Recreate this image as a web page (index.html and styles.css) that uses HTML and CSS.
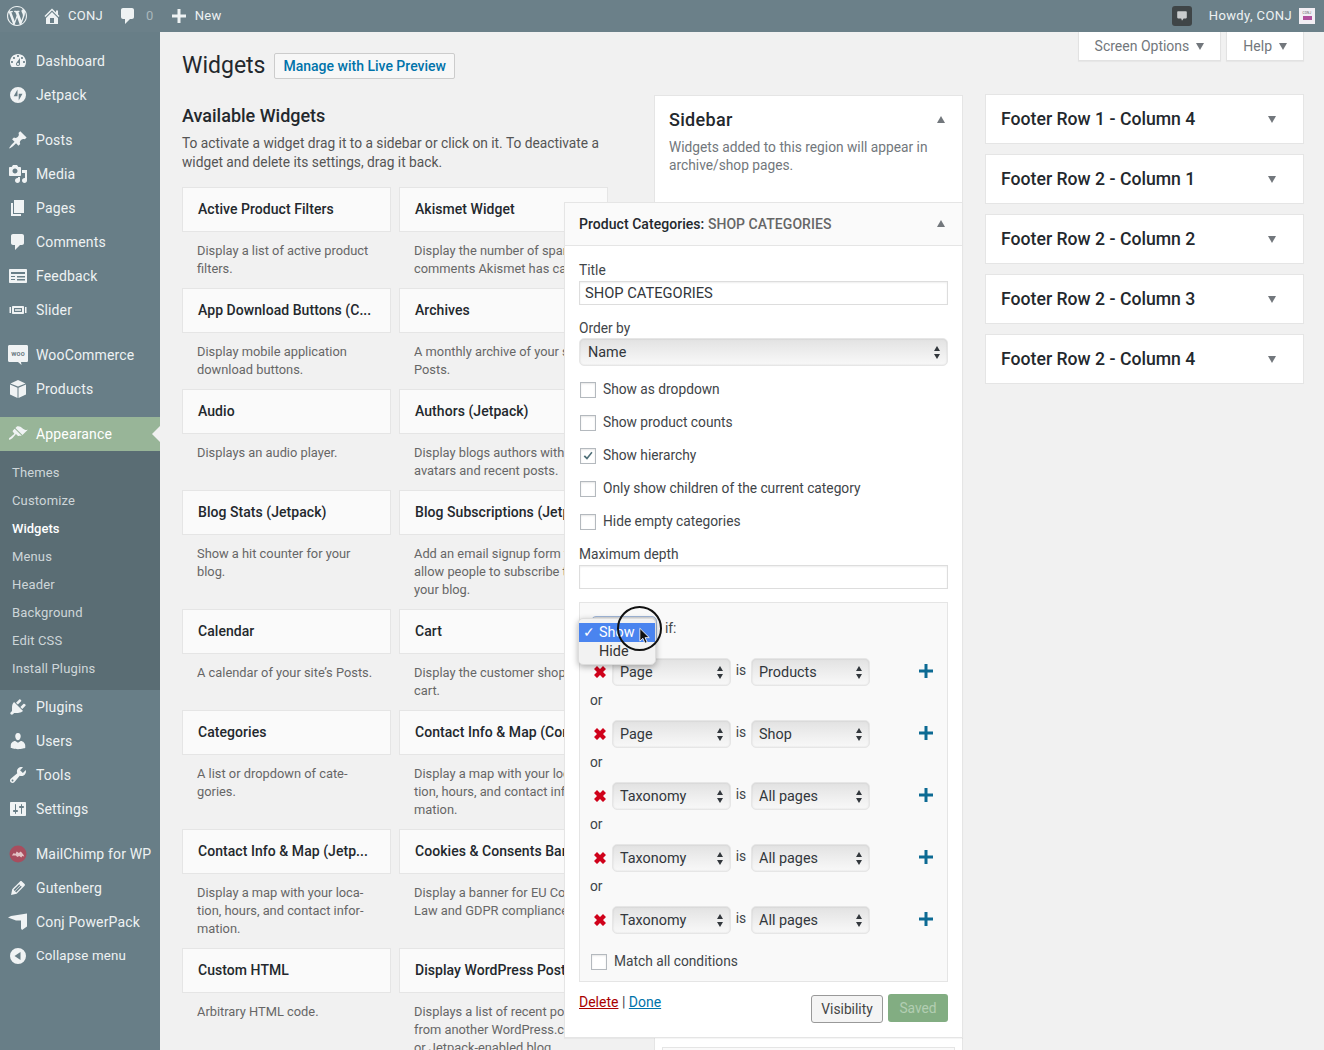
FILE: index.html
```html
<!DOCTYPE html>
<html lang="en">
<head>
<meta charset="utf-8">
<title>Widgets</title>
<link rel="stylesheet" href="styles.css">
</head>
<body>
<header class="adminbar">
  <div class="bar-left">
    <svg class="bar-logo" viewBox="0 0 20 20"><path d="M20 10c0-5.51-4.49-10-10-10C4.48 0 0 4.49 0 10c0 5.52 4.48 10 10 10 5.51 0 10-4.48 10-10zM7.78 15.37L4.37 6.22c.55-.02 1.17-.08 1.17-.08.5-.06.44-1.13-.06-1.11 0 0-1.45.11-2.37.11-.18 0-.37 0-.58-.01C4.12 2.69 6.87 1.11 10 1.11c2.33 0 4.45.87 6.05 2.34-.68-.11-1.65.39-1.65 1.58 0 .74.45 1.36.9 2.1.35.61.55 1.36.55 2.46 0 1.49-1.4 5-1.4 5l-3.03-8.37c.54-.02.82-.17.82-.17.5-.05.44-1.25-.06-1.22 0 0-1.44.12-2.38.12-.87 0-2.33-.12-2.33-.12-.5-.03-.56 1.2-.06 1.22l.92.08 1.26 3.41zM17.41 10c.24-.64.74-1.87.43-4.25.7 1.29 1.05 2.71 1.05 4.25 0 3.29-1.73 6.24-4.4 7.78.97-2.59 1.94-5.2 2.92-7.78zM6.1 18.09C3.12 16.65 1.11 13.53 1.11 10c0-1.3.23-2.48.72-3.59C3.25 10.3 4.67 14.2 6.1 18.09zm4.03-6.63l2.58 6.98c-.86.29-1.76.45-2.71.45-.79 0-1.57-.11-2.29-.33.81-2.38 1.62-4.74 2.42-7.1z"/></svg>
    <span class="bar-item bar-site"><svg class="bar-icon" viewBox="0 0 20 20"><path d="M16 8.5l1.53 1.53-1.06 1.06L10 4.62l-6.47 6.47-1.06-1.06L10 2.5l4 4v-2h2v4zm-6-2.46l6 5.99V18H4v-5.97zM12 17v-5H8v5h4z"/></svg>CONJ</span>
    <span class="bar-item bar-comments"><svg class="bar-icon" viewBox="0 0 20 20"><path d="M5 2h9c1.1 0 2 .9 2 2v7c0 1.1-.9 2-2 2h-2l-5 5v-5H5c-1.1 0-2-.9-2-2V4c0-1.1.9-2 2-2z"/></svg><span class="bar-zero">0</span></span>
    <span class="bar-item bar-new"><svg class="bar-icon" viewBox="0 0 20 20"><path d="M11.5 8.500h5.500v3h-5.500v5.500h-3v-5.500H3v-3h5.500V3h3z"/></svg>New</span>
  </div>
  <div class="bar-right">
    <span class="bar-notice"><svg viewBox="0 0 20 20"><path d="M5 4h10c.6 0 1 .4 1 1v7c0 .6-.4 1-1 1h-3l-2 3-1-3H5c-.6 0-1-.4-1-1V5c0-.6.4-1 1-1z"/></svg></span>
    <span class="bar-howdy">Howdy, CONJ</span>
    <span class="bar-avatar"><span class="avatar-text">CONJ</span><span class="avatar-mark"></span></span>
  </div>
</header>

<div class="shell">
  <nav class="sidemenu">
    <a class="menu-item"><svg viewBox="0 0 20 20"><path d="M3.760 16h12.480c1.100-1.370 1.760-3.110 1.760-5 0-4.420-3.580-8-8-8s-8 3.580-8 8c0 1.890.66 3.630 1.760 5zM10 4c.55 0 1 .45 1 1s-.45 1-1 1-1-.45-1-1 .45-1 1-1zM6 6c.55 0 1 .45 1 1s-.45 1-1 1-1-.45-1-1 .45-1 1-1zm8 0c.55 0 1 .45 1 1s-.45 1-1 1-1-.45-1-1 .45-1 1-1zm-5.370 5.550L12 7v6c0 1.100-.9 2-2 2s-2-.9-2-2c0-.57.24-1.080.63-1.450zM4 10c.55 0 1 .45 1 1s-.45 1-1 1-1-.45-1-1 .45-1 1-1zm12 0c.55 0 1 .45 1 1s-.45 1-1 1-1-.45-1-1 .45-1 1-1zm-5 3c0-.55-.45-1-1-1s-1 .45-1 1 .45 1 1 1 1-.45 1-1z" fill-rule="evenodd"/></svg>Dashboard</a>
    <a class="menu-item"><svg viewBox="0 0 20 20"><path fill-rule="evenodd" d="M10 2a8 8 0 100 16 8 8 0 000-16zM9.500 4.500v6.800H5.700zM10.700 15.500V8.700h3.800z"/></svg>Jetpack</a>
    <a class="menu-item menu-gap"><svg viewBox="0 0 20 20"><path d="M10.440 3.020l1.820-1.820 6.360 6.350-1.830 1.820c-1.050-.68-2.480-.57-3.410.36l-.75.75c-.92.93-1.040 2.350-.35 3.410l-1.830 1.820-2.410-2.410-2.800 2.790c-.42.42-3.380 2.710-3.800 2.290s1.860-3.390 2.280-3.810l2.790-2.790L4.100 9.360l1.830-1.820c1.050.69 2.480.57 3.400-.36l.75-.75c.93-.92 1.050-2.350.36-3.410z"/></svg>Posts</a>
    <a class="menu-item"><svg viewBox="0 0 20 20"><path d="M13 11V4c0-.55-.45-1-1-1h-1.670L9 1H5L3.670 3H2c-.55 0-1 .45-1 1v7c0 .55.45 1 1 1h10c.55 0 1-.45 1-1zM7 4.500c1.380 0 2.500 1.120 2.500 2.500S8.380 9.500 7 9.500 4.500 8.380 4.500 7 5.620 4.500 7 4.500zM14 6h5v10.500c0 1.380-1.120 2.500-2.500 2.500S14 17.880 14 16.500s1.120-2.500 2.500-2.500c.17 0 .34.02.5.05V9h-3V6zm-4 8.050V13h2v3.500c0 1.380-1.120 2.500-2.500 2.500S7 17.880 7 16.500 8.120 14 9.500 14c.17 0 .34.02.5.05z"/></svg>Media</a>
    <a class="menu-item"><svg viewBox="0 0 20 20"><path d="M6 15V2h10v13H6zm-1 1h8v2H3V5h2v11z"/></svg>Pages</a>
    <a class="menu-item"><svg viewBox="0 0 20 20"><path d="M5 2h9c1.100 0 2 .9 2 2v7c0 1.100-.9 2-2 2h-2l-5 5v-5H5c-1.100 0-2-.9-2-2V4c0-1.100.9-2 2-2z"/></svg>Comments</a>
    <a class="menu-item"><svg viewBox="0 0 20 20"><path fill-rule="evenodd" d="M2 3h16c.55 0 1 .45 1 1v12c0 .55-.45 1-1 1H2c-.55 0-1-.45-1-1V4c0-.55.45-1 1-1zm1 3v2h14V6zm0 4v1h4v-1zm0 3v1h4v-1zm6-3v1.500h8V10zm0 3v1.500h8V13z"/></svg>Feedback</a>
    <a class="menu-item"><svg viewBox="0 0 20 20"><path fill-rule="evenodd" d="M5 6h10c.55 0 1 .45 1 1v6c0 .55-.45 1-1 1H5c-.55 0-1-.45-1-1V7c0-.55.45-1 1-1zm1 2v4h8V8zM1.500 7H3v6H1.500zM17 7h1.500v6H17zM7 9h6v.8H7zm0 1.300h6v.8H7z"/></svg>Slider</a>
    <a class="menu-item menu-gap"><svg viewBox="0 0 20 20"><path d="M1.500 0h17C19.500 0 20 .6 20 1.500v14c0 1-.6 1.500-1.500 1.500H13l.5 3-3.500-3H1.500C.5 17 0 16.400 0 15.500v-14C0 .6.6 0 1.500 0z"/><text class="woo-text" x="10" y="11" text-anchor="middle">woo</text></svg>WooCommerce</a>
    <a class="menu-item"><svg viewBox="0 0 20 20"><path d="M10 1l7.500 3.400L10 7.600 2.500 4.400zM2 5.500l7.500 3.200V19L2 15.500zM18 5.500V15.500L10.500 19V8.700z"/></svg>Products</a>
    <a class="menu-item menu-gap menu-active"><svg viewBox="0 0 20 20"><path d="M14.480 11.060L7.410 3.990l1.500-1.500c.5-.56 2.300-.47 3.510.32 1.210.8 1.430 1.280 2.910 2.100 1.180.64 2.450 1.260 4.450.85zm-.71.71L6.700 4.700 4.930 6.470c-.39.39-.39 1.020 0 1.410l1.060 1.060c.39.39.39 1.030 0 1.420-.6.6-1.430 1.110-2.210 1.690-.35.26-.7.53-1.010.84C1.430 13.230.4 14.850 1.100 15.550s2.320-.33 3.680-1.690c.31-.31.58-.66.84-1.010.58-.78 1.090-1.610 1.690-2.210.39-.39 1.020-.39 1.410 0l1.060 1.060c.39.39 1.030.39 1.420 0z"/></svg>Appearance</a>
    <div class="submenu">
      <a class="sub-item">Themes</a>
      <a class="sub-item">Customize</a>
      <a class="sub-item sub-current">Widgets</a>
      <a class="sub-item">Menus</a>
      <a class="sub-item">Header</a>
      <a class="sub-item">Background</a>
      <a class="sub-item">Edit CSS</a>
      <a class="sub-item">Install Plugins</a>
    </div>
    <a class="menu-item"><svg viewBox="0 0 20 20"><path d="M13.110 4.360L9.870 7.600 8 5.730l3.240-3.240c.35-.34 1.050-.2 1.560.32.52.51.66 1.210.31 1.550zm-8 1.770l.91-1.120 9.010 9.010-1.190.84c-.71.71-2.630 1.160-3.820 1.160H6.140L4.900 17.260c-.59.59-1.540.59-2.120 0-.59-.58-.59-1.530 0-2.120l1.240-1.240v-3.880c0-1.130.4-3.190 1.090-3.890zm7.260 3.970l3.240-3.240c.34-.35 1.040-.21 1.550.31.52.51.66 1.210.31 1.550l-3.240 3.250z"/></svg>Plugins</a>
    <a class="menu-item"><svg viewBox="0 0 20 20"><path d="M10 9.250c-2.270 0-2.730-3.440-2.730-3.440C7 4.020 7.820 2 9.970 2c2.160 0 2.980 2.020 2.710 3.810 0 0-.41 3.440-2.680 3.440zm0 2.570L12.720 10c2.390 0 4.520 2.330 4.520 4.530v2.490s-3.650 1.130-7.240 1.130c-3.650 0-7.240-1.130-7.240-1.130v-2.490c0-2.250 1.940-4.480 4.470-4.480z"/></svg>Users</a>
    <a class="menu-item"><svg viewBox="0 0 20 20"><path d="M16.680 9.770c-1.340 1.340-3.300 1.670-4.950.99l-5.410 6.520c-.99.99-2.590.99-3.580 0s-.99-2.59 0-3.570l6.520-5.420c-.68-1.650-.35-3.610.99-4.950 1.280-1.280 3.120-1.620 4.720-1.060l-2.890 2.890 2.820 2.820 2.860-2.870c.53 1.580.18 3.390-1.080 4.650zM3.810 16.210c.4.39 1.040.39 1.430 0 .4-.4.4-1.040 0-1.430-.39-.4-1.030-.4-1.430 0-.39.39-.39 1.030 0 1.430z"/></svg>Tools</a>
    <a class="menu-item"><svg viewBox="0 0 20 20"><path d="M18 16V4c0-.55-.45-1-1-1H3c-.55 0-1 .45-1 1v12c0 .55.45 1 1 1h14c.55 0 1-.45 1-1zM8 11h1c.55 0 1 .45 1 1s-.45 1-1 1H8v1.500c0 .28-.22.5-.5.5s-.5-.22-.5-.5V13H6c-.55 0-1-.45-1-1s.45-1 1-1h1V5.500c0-.28.22-.5.5-.5s.5.22.5.5V11zm5-2h-1c-.55 0-1-.45-1-1s.45-1 1-1h1V5.500c0-.28.22-.5.5-.5s.5.22.5.5V7h1c.55 0 1 .45 1 1s-.45 1-1 1h-1v5.500c0 .28-.22.5-.5.5s-.5-.22-.5-.5V9z"/></svg>Settings</a>
    <a class="menu-item menu-gap"><svg viewBox="0 0 20 20"><circle class="chimp-bg" cx="10" cy="10" r="8.500"/><path class="chimp-fg" d="M3.800 11.500l2-2.500 1.500 1 1.500-2.500 2 1.500 2-1.500 2.500 3 1 2-2-.5-1 1.500-2-1.500-2 1-1.500-1.500z"/></svg>MailChimp for WP</a>
    <a class="menu-item"><svg viewBox="0 0 20 20"><path d="M13.890 3.390l2.710 2.720c.46.46.42 1.240.03 1.640l-8.010 8.020-5.560 1.160 1.160-5.580s7.600-7.630 7.990-8.030c.39-.39 1.220-.39 1.680.07zm-2.730 2.790l-5.590 5.610 1.110 1.110 5.540-5.650zm-2.970 8.230l5.580-5.600-1.070-1.080-5.590 5.600z"/></svg>Gutenberg</a>
    <a class="menu-item"><svg viewBox="0 0 20 20"><path d="M0 5.500L3 4 19 1.500v13L14 18l-1-1.500V8.500H8z"/></svg>Conj PowerPack</a>
    <a class="menu-item menu-collapse"><svg viewBox="0 0 20 20"><path fill-rule="evenodd" d="M10 2a8 8 0 100 16 8 8 0 000-16zm2.500 4v8L6.500 10z"/></svg>Collapse menu</a>
  </nav>

  <main class="content">
    <div class="screen-tabs">
      <span class="screen-tab">Screen Options<i class="tri-down"></i></span>
      <span class="screen-tab">Help<i class="tri-down"></i></span>
    </div>
    <div class="columns">
      <section class="available">
        <div class="title-row">
          <h1 class="page-title">Widgets</h1>
          <a class="live-btn">Manage with Live Preview</a>
        </div>
        <h2 class="avail-title">Available Widgets</h2>
        <p class="avail-intro">To activate a widget drag it to a sidebar or click on it. To deactivate a widget and delete its settings, drag it back.</p>
        <div class="widget-grid">
          <article class="w"><h3 class="w-title">Active Product Filters</h3><p class="w-desc">Display a list of active product<br>filters.</p></article>
          <article class="w"><h3 class="w-title">Akismet Widget</h3><p class="w-desc">Display the number of spam<br>comments Akismet has caught.</p></article>
          <article class="w"><h3 class="w-title">App Download Buttons (C...</h3><p class="w-desc">Display mobile application<br>download buttons.</p></article>
          <article class="w"><h3 class="w-title">Archives</h3><p class="w-desc">A monthly archive of your site’s<br>Posts.</p></article>
          <article class="w"><h3 class="w-title">Audio</h3><p class="w-desc">Displays an audio player.</p></article>
          <article class="w"><h3 class="w-title">Authors (Jetpack)</h3><p class="w-desc">Display blogs authors with<br>avatars and recent posts.</p></article>
          <article class="w"><h3 class="w-title">Blog Stats (Jetpack)</h3><p class="w-desc">Show a hit counter for your<br>blog.</p></article>
          <article class="w"><h3 class="w-title">Blog Subscriptions (Jetpack)</h3><p class="w-desc">Add an email signup form to<br>allow people to subscribe to<br>your blog.</p></article>
          <article class="w"><h3 class="w-title">Calendar</h3><p class="w-desc">A calendar of your site’s Posts.</p></article>
          <article class="w"><h3 class="w-title">Cart</h3><p class="w-desc">Display the customer shopping<br>cart.</p></article>
          <article class="w"><h3 class="w-title">Categories</h3><p class="w-desc">A list or dropdown of cate-<br>gories.</p></article>
          <article class="w"><h3 class="w-title">Contact Info &amp; Map (Core)</h3><p class="w-desc">Display a map with your loca-<br>tion, hours, and contact infor-<br>mation.</p></article>
          <article class="w"><h3 class="w-title">Contact Info &amp; Map (Jetp...</h3><p class="w-desc">Display a map with your loca-<br>tion, hours, and contact infor-<br>mation.</p></article>
          <article class="w"><h3 class="w-title">Cookies &amp; Consents Banner</h3><p class="w-desc">Display a banner for EU Cookie<br>Law and GDPR compliance.</p></article>
          <article class="w"><h3 class="w-title">Custom HTML</h3><p class="w-desc">Arbitrary HTML code.</p></article>
          <article class="w"><h3 class="w-title">Display WordPress Posts</h3><p class="w-desc">Displays a list of recent posts<br>from another WordPress.com<br>or Jetpack-enabled blog.</p></article>
        </div>
      </section>

      <section class="sidebar-col">
        <div class="sb-card">
          <div class="sb-head">
            <h2 class="sb-title">Sidebar</h2><i class="tri-up"></i>
          </div>
          <p class="sb-desc">Widgets added to this region will appear in archive/shop pages.</p>
          <div class="editor">
            <div class="ed-head">
              <span class="ed-title"><b>Product Categories:</b> <span class="ed-sub">SHOP CATEGORIES</span></span><i class="tri-up"></i>
            </div>
            <div class="ed-body">
              <label class="f-label">Title</label>
              <div class="f-input">SHOP CATEGORIES</div>
              <label class="f-label f-gap">Order by</label>
              <div class="sel sel-full">Name</div>
              <div class="checks">
                <div class="check"><span class="box"></span>Show as dropdown</div>
                <div class="check"><span class="box"></span>Show product counts</div>
                <div class="check"><span class="box"><svg class="tick" viewBox="0 0 16 16"><path d="M3 8.500l1.500-1.500 2.300 2.500L11.800 3l1.400 1.200-6.300 8z"/></svg></span>Show hierarchy</div>
                <div class="check"><span class="box"></span>Only show children of the current category</div>
                <div class="check"><span class="box"></span>Hide empty categories</div>
              </div>
              <label class="f-label f-gap-s">Maximum depth</label>
              <div class="f-input"></div>

              <div class="panel">
                <div class="p-top"><div class="sel sel-show"></div><span class="p-if">if:</span></div>
                <div class="popup">
                  <div class="pop-row pop-on"><span class="pop-check">✓</span>Show</div>
                  <div class="pop-row">Hide</div>
                </div>
                <div class="cursor-ring"></div>
                <svg class="cursor" viewBox="0 0 14 20"><path d="M1 1v15l3.500-3.300 2.500 5.800 2.600-1.100-2.500-5.500H12z"/></svg>

                <div class="rule">
                  <svg class="rm" viewBox="0 0 14 14"><path d="M3.500 0L7 3.500 10.500 0 14 3.500 10.500 7 14 10.500 10.500 14 7 10.500 3.500 14 0 10.500 3.500 7 0 3.500z"/></svg>
                  <div class="sel sel-rule">Page</div><span class="rule-is">is</span><div class="sel sel-rule">Products</div>
                  <svg class="add" viewBox="0 0 14 14"><path d="M5.500 0h3v5.500H14v3H8.500V14h-3V8.500H0v-3h5.500z"/></svg>
                </div>
                <div class="rule-or">or</div>
                <div class="rule">
                  <svg class="rm" viewBox="0 0 14 14"><path d="M3.500 0L7 3.500 10.500 0 14 3.500 10.500 7 14 10.500 10.500 14 7 10.500 3.500 14 0 10.500 3.500 7 0 3.500z"/></svg>
                  <div class="sel sel-rule">Page</div><span class="rule-is">is</span><div class="sel sel-rule">Shop</div>
                  <svg class="add" viewBox="0 0 14 14"><path d="M5.500 0h3v5.500H14v3H8.500V14h-3V8.500H0v-3h5.500z"/></svg>
                </div>
                <div class="rule-or">or</div>
                <div class="rule">
                  <svg class="rm" viewBox="0 0 14 14"><path d="M3.500 0L7 3.500 10.500 0 14 3.500 10.500 7 14 10.500 10.500 14 7 10.500 3.500 14 0 10.500 3.500 7 0 3.500z"/></svg>
                  <div class="sel sel-rule">Taxonomy</div><span class="rule-is">is</span><div class="sel sel-rule">All pages</div>
                  <svg class="add" viewBox="0 0 14 14"><path d="M5.500 0h3v5.500H14v3H8.500V14h-3V8.500H0v-3h5.500z"/></svg>
                </div>
                <div class="rule-or">or</div>
                <div class="rule">
                  <svg class="rm" viewBox="0 0 14 14"><path d="M3.500 0L7 3.500 10.500 0 14 3.500 10.500 7 14 10.500 10.500 14 7 10.500 3.500 14 0 10.500 3.500 7 0 3.500z"/></svg>
                  <div class="sel sel-rule">Taxonomy</div><span class="rule-is">is</span><div class="sel sel-rule">All pages</div>
                  <svg class="add" viewBox="0 0 14 14"><path d="M5.500 0h3v5.500H14v3H8.500V14h-3V8.500H0v-3h5.500z"/></svg>
                </div>
                <div class="rule-or">or</div>
                <div class="rule">
                  <svg class="rm" viewBox="0 0 14 14"><path d="M3.500 0L7 3.500 10.500 0 14 3.500 10.500 7 14 10.500 10.500 14 7 10.500 3.500 14 0 10.500 3.500 7 0 3.500z"/></svg>
                  <div class="sel sel-rule">Taxonomy</div><span class="rule-is">is</span><div class="sel sel-rule">All pages</div>
                  <svg class="add" viewBox="0 0 14 14"><path d="M5.500 0h3v5.500H14v3H8.500V14h-3V8.500H0v-3h5.500z"/></svg>
                </div>
                <div class="check p-match"><span class="box"></span>Match all conditions</div>
              </div>

              <div class="ed-foot">
                <div class="ed-links"><a class="link-del">Delete</a> | <a class="link-done">Done</a></div>
                <div class="ed-btns"><span class="btn-vis">Visibility</span><span class="btn-saved">Saved</span></div>
              </div>
            </div>
          </div>
          <div class="next-widget"></div>
        </div>
      </section>

      <section class="footer-col">
        <div class="fr-card"><h2 class="fr-title">Footer Row 1 - Column 4</h2><i class="tri-down"></i></div>
        <div class="fr-card"><h2 class="fr-title">Footer Row 2 - Column 1</h2><i class="tri-down"></i></div>
        <div class="fr-card"><h2 class="fr-title">Footer Row 2 - Column 2</h2><i class="tri-down"></i></div>
        <div class="fr-card"><h2 class="fr-title">Footer Row 2 - Column 3</h2><i class="tri-down"></i></div>
        <div class="fr-card"><h2 class="fr-title">Footer Row 2 - Column 4</h2><i class="tri-down"></i></div>
      </section>
    </div>
  </main>
</div>
</body>
</html>
```

FILE: styles.css
```css
* { box-sizing: border-box; }
html, body { margin: 0; height: 100%; overflow: hidden; }
body {
  font-family: Roboto, "Liberation Sans", sans-serif;
  font-size: 13px;
  line-height: 18px;
  color: #444;
  background: #f1f1f1;
  height: 1050px;
}
h1, h2, h3, p { margin: 0; }
i { display: inline-block; }

.tri-down, .tri-up { width: 0; height: 0; border-left: 4.500px solid transparent; border-right: 4.500px solid transparent; }
.tri-down { border-top: 7px solid #72777c; }
.tri-up { border-bottom: 7px solid #72777c; }

/* admin bar */
.adminbar { height: 32px; background: #6b8089; color: #eef2f3; display: flex; justify-content: space-between; align-items: center; letter-spacing: .3px; }
.adminbar svg { fill: #eef2f3; }
.bar-left, .bar-right { display: flex; align-items: center; }
.bar-logo { width: 20px; height: 20px; margin-left: 7px; }
.bar-item { display: flex; align-items: center; }
.bar-icon { width: 20px; height: 20px; }
.bar-site { margin-left: 15px; gap: 6px; }
.bar-comments { margin-left: 15px; gap: 8px; }
.bar-zero { color: #a9b7bc; }
.bar-new { margin-left: 15px; gap: 6px; }
.bar-notice { width: 20px; height: 20px; margin-right: 2px; background: #3f4547; border-radius: 3px; display: flex; align-items: center; justify-content: center; }
.bar-notice svg { width: 16px; height: 16px; fill: #c9cccd; }
.bar-howdy { margin-left: 15px; letter-spacing: .4px; }
.bar-avatar { width: 16px; height: 16px; margin: 0 9px 0 7px; background: #f2eef4; display: flex; flex-direction: column; align-items: center; padding-top: 3px; gap: 1px; }
.avatar-text { font-size: 3px; line-height: 4px; color: #555; }
.avatar-mark { width: 9px; height: 4px; background: #b04f9d; }

/* side menu */
.shell { display: flex; height: 1018px; }
.sidemenu { width: 160px; flex: none; background: #687e87; padding-top: 12px; }
.menu-item { display: flex; align-items: center; gap: 8px; height: 34px; padding-left: 8px; font-size: 14px; letter-spacing: .15px; color: #eef2f3; }
.menu-item svg { width: 20px; height: 20px; fill: #f0f3f4; flex: none; }
.menu-gap { margin-top: 11px; }
.menu-collapse { font-size: 13.300px; }
.menu-active { position: relative; background: #98b598; color: #fff; }
.menu-active::after { content: ""; position: absolute; right: 0; top: 9px; border: 8px solid transparent; border-left: 0; border-right-color: #f1f1f1; }
.woo-text { font-size: 7px; fill: #5b6e75; font-weight: 500; }
.chimp-bg { fill: #a84d5e; }
.chimp-fg { fill: #e3c3c5; }
.submenu { background: #5a6d74; padding: 8px 0 7px; }
.sub-item { display: block; height: 28px; line-height: 28px; padding-left: 12px; letter-spacing: .15px; color: #ced6d9; }
.sub-current { color: #fff; font-weight: 500; letter-spacing: 0; }

/* content */
.content { flex: 1; min-width: 0; padding: 0 20px 0 22px; }
.screen-tabs { display: flex; justify-content: flex-end; gap: 5px; height: 29px; margin-bottom: -8px; }
.screen-tab { display: flex; align-items: center; gap: 7px; padding: 0 16px; height: 29px; background: #fff; border: 1px solid #e2e2e2; border-top: 0; color: #72777c; font-size: 14px; box-shadow: 0 1px 1px rgba(0,0,0,.04); }
.columns { display: flex; align-items: flex-start; }

.available { flex: none; width: 426px; }
.title-row { display: flex; align-items: center; gap: 9px; height: 26px; }
.page-title { font-size: 23px; font-weight: 400; color: #23282d; line-height: 28px; }
.live-btn { display: block; height: 26px; line-height: 24px; padding: 0 8px; border: 1px solid #ccc; background: #f7f7f7; border-radius: 2px; color: #0073aa; font-weight: 500; font-size: 14px; }
.avail-title { margin-top: 26px; font-size: 18px; line-height: 22px; font-weight: 500; color: #23282d; }
.avail-intro { margin-top: 7px; font-size: 13.750px; line-height: 19px; color: #555; width: 426px; }
.widget-grid { display: grid; grid-template-columns: 209px 209px; column-gap: 8px; margin-top: 15px; }
.w { min-width: 0; }
.w-title { height: 45px; line-height: 43px; padding: 0 15px; background: #fafafa; border: 1px solid #e5e5e5; font-size: 14px; font-weight: 500; letter-spacing: .05px; color: #23282d; white-space: nowrap; overflow: hidden; }
.w-desc { padding: 10px 15px 10px; color: #666; font-size: 12.850px; white-space: nowrap; }

.sidebar-col { flex: none; margin-left: 46px; margin-top: 42px; width: 309px; position: relative; z-index: 2; }
.sb-card { background: #fff; border: 1px solid #e5e5e5; min-height: 1000px; }
.sb-head { display: flex; justify-content: space-between; align-items: center; padding: 14px 17px 0 14px; }
.sb-title { font-size: 18px; letter-spacing: .3px; line-height: 19px; font-weight: 500; color: #23282d; }
.sb-desc { padding: 9px 14px 0; font-size: 13.750px; line-height: 18px; color: #72777c; height: 73px; }
.editor { margin-left: -91px; background: #fff; border: 1px solid #e5e5e5; margin-right: -1px; box-shadow: 0 1px 1px rgba(0,0,0,.04); }
.ed-head { display: flex; justify-content: space-between; align-items: center; height: 43px; padding: 0 17px 1px 14px; background: #fafafa; border-bottom: 1px solid #e5e5e5; }
.ed-title { font-size: 14px; letter-spacing: .05px; color: #23282d; }
.ed-title b { font-weight: 500; }
.ed-sub { color: #666; font-weight: 500; }
.ed-body { padding: 15px 14px 14px 14px; color: #3f4549; }
.f-label { display: block; font-size: 13.750px; height: 18px; color: #3f4549; }
.f-gap { margin-top: 14px; }
.f-gap-s { margin-top: 15px; }
.f-input { height: 24px; margin-top: 2px; border: 1px solid #ddd; background: #fff; padding: 0 5px; line-height: 22px; font-size: 14.700px; color: #32373c; box-shadow: inset 0 1px 2px rgba(0,0,0,.07); }
.sel { position: relative; height: 28px; line-height: 27px; padding-left: 7px; border-radius: 5px; font-size: 14.400px; color: #32373c; background: linear-gradient(#e2e2e2, #f1f1f1 65%, #f8f8f8); border: 1px solid #e6e6e6; box-shadow: inset 0 0 2px rgba(0,0,0,.12); }
.sel::before, .sel::after { content: ""; position: absolute; right: 7px; border-left: 3.500px solid transparent; border-right: 3.500px solid transparent; }
.sel::before { top: 7px; border-bottom: 5px solid #32373c; }
.sel::after { top: 15px; border-top: 5px solid #32373c; }
.sel-full { margin-top: 1px; padding-left: 8px; }
.checks { margin-top: 14px; display: flex; flex-direction: column; gap: 15px; }
.check { display: flex; align-items: center; height: 18px; font-size: 13.750px; color: #3f4549; }
.box { width: 16px; height: 16px; margin: 1px 7px 0 1px; flex: none; background: #fff; border: 1px solid #b4b9be; box-shadow: inset 0 1px 2px rgba(0,0,0,.1); }
.tick { display: block; width: 14px; height: 14px; fill: #4f6f78; }

.panel { position: relative; margin-top: 13px; height: 380px; padding: 13px 14px 0 11px; background: #f9f9f9; border: 1px solid #e5e5e5; font-size: 13.750px; }
.p-top { display: flex; align-items: center; height: 28px; margin-bottom: 14px; }
.sel-show { width: 66px; border-color: #9fb6d8; }
.p-if { margin-left: 8px; margin-top: -4px; }
.rule { display: flex; align-items: center; height: 28px; }
.rm { width: 12px; height: 12px; fill: #d0021b; margin: 0 6px 0 3px; flex: none; }
.sel-rule { width: 119px; flex: none; }
.rule-is { width: 20px; text-align: center; margin-top: -4px; }
.add { width: 14px; height: 14px; fill: #0c6a93; margin-left: auto; margin-top: -3px; }
.rule-or { height: 34px; line-height: 28px; margin-left: -1px; }
.p-match { margin-top: 18px; margin-left: -1px; }

.popup { position: absolute; left: -2px; top: 15px; width: 78px; height: 47px; padding-top: 4px; background: #f2f2f2; border: 1px solid #ddd; border-radius: 5px; box-shadow: 0 2px 6px rgba(0,0,0,.3); z-index: 3; }
.pop-row { position: relative; height: 19px; line-height: 19px; padding-left: 20px; font-size: 14.400px; color: #333; }
.pop-on { background: #4a84ef; color: #fff; }
.pop-check { position: absolute; left: 4px; font-size: 14px; }
.cursor-ring { position: absolute; left: 37px; top: 3px; width: 45px; height: 45px; border: 2px solid #111; border-radius: 50%; z-index: 4; }
.cursor { position: absolute; left: 59px; top: 24px; width: 12px; height: 18px; z-index: 5; fill: #111; stroke: #fff; stroke-width: 1; }

.ed-foot { display: flex; justify-content: space-between; margin-top: 12px; }
.ed-links { margin-top: -1px; font-size: 14px; }
.link-del { color: #a00; text-decoration: underline; }
.link-done { color: #0073aa; text-decoration: underline; }
.ed-btns { display: flex; gap: 5px; }
.btn-vis { display: block; height: 28px; width: 72px; text-align: center; line-height: 27px; margin-top: 1px; background: #f4f4f4; border: 1px solid #999; border-radius: 3px; font-size: 13.750px; color: #444; }
.btn-saved { display: block; height: 28px; width: 60px; text-align: center; line-height: 28px; background: #82ad82; border-radius: 3px; font-size: 13.750px; color: #b2ceb2; }
.next-widget { margin: 9px 7px; height: 44px; border: 1px solid #e5e5e5; background: #fafafa; }

.footer-col { flex: none; margin-left: 22px; margin-top: 41px; width: 319px; display: flex; flex-direction: column; gap: 10px; }
.fr-card { height: 50px; display: flex; justify-content: space-between; align-items: center; padding: 0 27px 0 15px; background: #fff; border: 1px solid #e5e5e5; }
.fr-title { font-size: 17.650px; font-weight: 500; color: #23282d; }
```
